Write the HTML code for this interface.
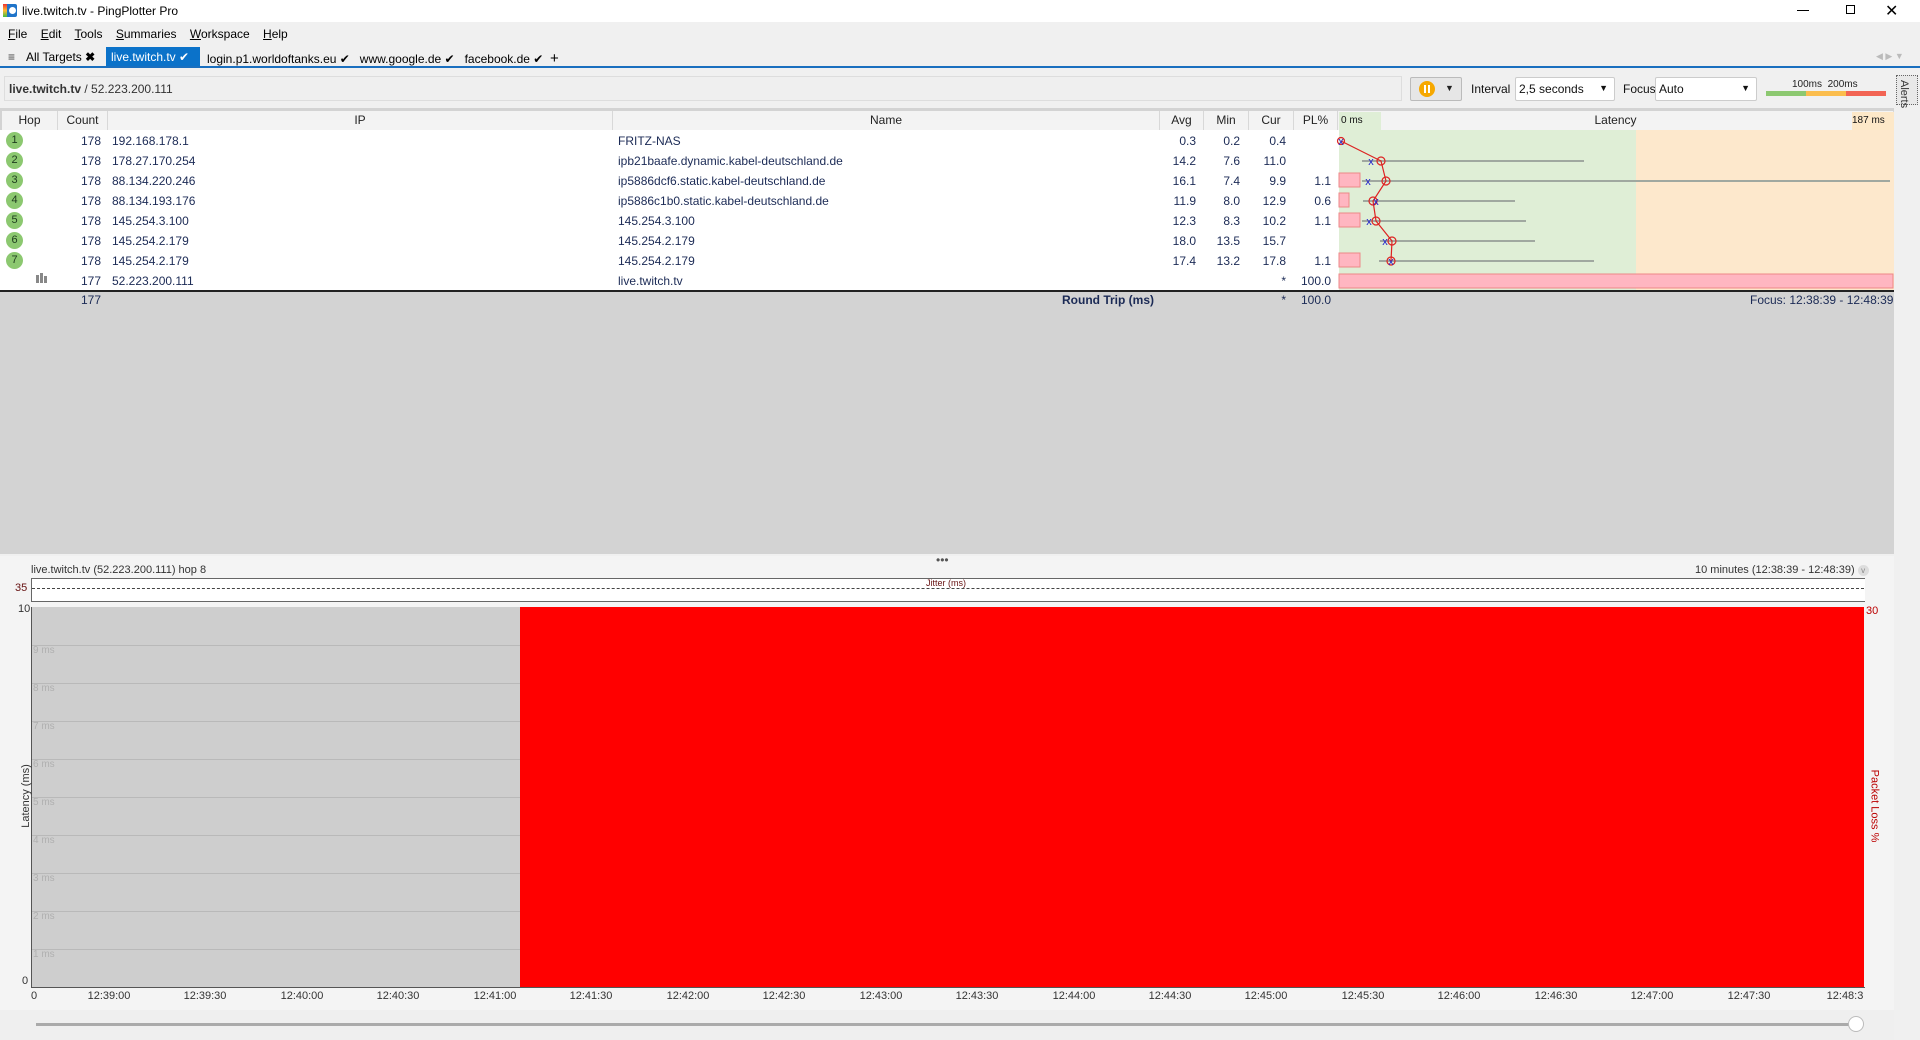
<!DOCTYPE html>
<html><head><meta charset="utf-8"><style>
*{margin:0;padding:0;box-sizing:border-box}
body{width:1920px;height:1040px;overflow:hidden;background:#f0f0f0;font-family:"Liberation Sans",sans-serif;font-size:12px;color:#1b2a55;position:relative}
.a{position:absolute;white-space:nowrap}
.r{text-align:right}
.hc{position:absolute;top:111px;height:19px;border-right:1px solid #d8d8d8;text-align:center;line-height:18px;color:#222;background:#f3f3f3}
.hop{position:absolute;left:6px;width:17px;height:17px;border-radius:50%;background:#8cc870;color:#1d3a1d;font-size:11px;text-align:center;line-height:17px}
.tl{position:absolute;top:990px;font-size:11px;color:#333;transform:translateX(-50%)}
.gl{position:absolute;left:32px;width:488px;height:1px;background:#b9b9b9}
.gt{position:absolute;left:33px;font-size:10px;color:#b0b0b0}
</style></head><body>
<div class="a" style="left:0;top:0;width:1920px;height:22px;background:#fff"></div>
<div class="a" style="left:3px;top:4px;width:14px;height:13px;background:#1f74c9;border-radius:2px"></div>
<div class="a" style="left:3px;top:4px;width:4px;height:13px;background:linear-gradient(#e33,#fb3,#4b4)"></div>
<div class="a" style="left:9px;top:7px;width:7px;height:7px;border-radius:50%;background:#fff"></div>
<div class="a" style="left:22px;top:4px;font-size:12px;color:#000">live.twitch.tv - PingPlotter Pro</div>
<div class="a" style="left:1797px;top:10px;width:12px;height:1px;background:#000"></div>
<div class="a" style="left:1846px;top:5px;width:9px;height:9px;border:1px solid #000"></div>
<div class="a" style="left:1885px;top:1px;font-size:16px;color:#000">✕</div>
<div class="a" style="left:8px;top:27px;color:#000"><u>F</u>ile &nbsp;&nbsp; <u>E</u>dit &nbsp;&nbsp; <u>T</u>ools &nbsp;&nbsp; <u>S</u>ummaries &nbsp;&nbsp; <u>W</u>orkspace &nbsp;&nbsp; <u>H</u>elp</div>
<div class="a" style="left:8px;top:50px;color:#444">≡</div>
<div class="a" style="left:26px;top:50px;color:#000">All Targets <b>✖</b></div>
<div class="a" style="left:106px;top:47px;width:94px;height:20px;background:#0b72c9"></div>
<div class="a" style="left:111px;top:50px;color:#fff">live.twitch.tv ✔</div>
<div class="a" style="left:207px;top:50px;color:#000">login.p1.worldoftanks.eu ✔ &nbsp; www.google.de ✔ &nbsp; facebook.de ✔ &nbsp;<span style="font-size:15px">+</span></div>
<div class="a" style="left:1876px;top:51px;color:#bbb;font-size:9px">◀ ▶ ▼</div>
<div class="a" style="left:0;top:66px;width:1920px;height:2px;background:#1a6fbf"></div>
<div class="a" style="left:4px;top:76px;width:1398px;height:25px;border:1px solid #ddd;background:#efefef"></div>
<div class="a" style="left:9px;top:82px;color:#333"><b>live.twitch.tv</b> / 52.223.200.111</div>
<div class="a" style="left:1410px;top:77px;width:52px;height:24px;border:1px solid #bbb;background:#e6e6e6;border-radius:2px"></div>
<div class="a" style="left:1419px;top:81px;width:16px;height:16px;border-radius:50%;background:#f6a800"></div>
<div class="a" style="left:1424px;top:85px;width:2px;height:8px;background:#fff"></div><div class="a" style="left:1428px;top:85px;width:2px;height:8px;background:#fff"></div>
<div class="a" style="left:1445px;top:83px;font-size:9px;color:#222">▼</div>
<div class="a" style="left:1471px;top:82px;color:#111">Interval</div>
<div class="a" style="left:1515px;top:77px;width:100px;height:24px;border:1px solid #ccc;background:#fff;border-radius:2px;padding:4px 3px;color:#111">2,5 seconds<span style="position:absolute;right:6px;top:5px;font-size:9px">▼</span></div>
<div class="a" style="left:1623px;top:82px;color:#111">Focus</div>
<div class="a" style="left:1655px;top:77px;width:102px;height:24px;border:1px solid #ccc;background:#fff;border-radius:2px;padding:4px 3px;color:#111">Auto<span style="position:absolute;right:6px;top:5px;font-size:9px">▼</span></div>
<div class="a" style="left:1792px;top:79px;font-size:10px;color:#222">100ms &nbsp;200ms</div>
<div class="a" style="left:1766px;top:91px;width:40px;height:5px;background:#8cc870"></div>
<div class="a" style="left:1806px;top:91px;width:40px;height:5px;background:#fbbd4d"></div>
<div class="a" style="left:1846px;top:91px;width:40px;height:5px;background:#f26454"></div>
<div class="a" style="left:1896px;top:75px;width:22px;height:30px;border:1px dotted #666;background:#e8e8e8"></div>
<div class="a" style="left:1898px;top:80px;font-size:11px;color:#333;transform:rotate(90deg);transform-origin:6px 6px">Alerts</div>
<div class="a" style="left:0;top:108px;width:1894px;height:446px;background:#d3d3d3"></div>
<div class="a" style="left:0;top:130px;width:1894px;height:160px;background:#fff"></div>
<div class="hc" style="left:2px;width:56px">Hop</div>
<div class="hc" style="left:58px;width:50px">Count</div>
<div class="hc" style="left:108px;width:505px">IP</div>
<div class="hc" style="left:613px;width:547px">Name</div>
<div class="hc" style="left:1160px;width:44px">Avg</div>
<div class="hc" style="left:1204px;width:45px">Min</div>
<div class="hc" style="left:1249px;width:45px">Cur</div>
<div class="hc" style="left:1294px;width:44px">PL%</div>
<div class="hc" style="left:1338px;width:556px;background:#f3f3f3">Latency</div>
<div class="a" style="left:1339px;top:112px;width:42px;height:18px;background:#dfeed6;font-size:10px;line-height:18px;padding-left:2px;color:#111">0 ms</div>
<div class="a" style="left:1852px;top:112px;width:42px;height:18px;background:#fde8c8;font-size:10px;line-height:18px;color:#111">187 ms</div>
<div class="a" style="left:1339px;top:130px;width:297px;height:160px;background:#dfeed6"></div>
<div class="a" style="left:1636px;top:130px;width:258px;height:160px;background:#fde8cc"></div>
<div class="a" style="left:0;top:290px;width:1894px;height:2px;background:#222"></div>
<div class="hop" style="top:132px">1</div><div class="hop" style="top:152px">2</div><div class="hop" style="top:172px">3</div><div class="hop" style="top:192px">4</div><div class="hop" style="top:212px">5</div><div class="hop" style="top:232px">6</div><div class="hop" style="top:252px">7</div>
<div class="a" style="left:36px;top:275px;width:3px;height:8px;background:#888"></div><div class="a" style="left:40px;top:273px;width:3px;height:10px;background:#888"></div><div class="a" style="left:44px;top:276px;width:3px;height:7px;background:#888"></div>
<div class="a r" style="left:58px;top:131px;width:43px;line-height:20px">178<br>178<br>178<br>178<br>178<br>178<br>178<br>177</div>
<div class="a" style="left:112px;top:131px;line-height:20px">192.168.178.1<br>178.27.170.254<br>88.134.220.246<br>88.134.193.176<br>145.254.3.100<br>145.254.2.179<br>145.254.2.179<br>52.223.200.111</div>
<div class="a" style="left:618px;top:131px;line-height:20px">FRITZ-NAS<br>ipb21baafe.dynamic.kabel-deutschland.de<br>ip5886dcf6.static.kabel-deutschland.de<br>ip5886c1b0.static.kabel-deutschland.de<br>145.254.3.100<br>145.254.2.179<br>145.254.2.179<br>live.twitch.tv</div>
<div class="a r" style="left:1160px;top:131px;width:36px;line-height:20px">0.3<br>14.2<br>16.1<br>11.9<br>12.3<br>18.0<br>17.4</div>
<div class="a r" style="left:1204px;top:131px;width:36px;line-height:20px">0.2<br>7.6<br>7.4<br>8.0<br>8.3<br>13.5<br>13.2</div>
<div class="a r" style="left:1249px;top:131px;width:37px;line-height:20px">0.4<br>11.0<br>9.9<br>12.9<br>10.2<br>15.7<br>17.8<br>*</div>
<div class="a r" style="left:1294px;top:131px;width:37px;line-height:20px">&nbsp;<br>&nbsp;<br>1.1<br>0.6<br>1.1<br>&nbsp;<br>1.1<br>100.0</div>
<div class="a r" style="left:58px;top:293px;width:43px">177</div>
<div class="a" style="left:1062px;top:293px"><b>Round Trip (ms)</b></div>
<div class="a r" style="left:1249px;top:293px;width:37px">*</div>
<div class="a r" style="left:1294px;top:293px;width:37px">100.0</div>
<div class="a" style="left:1750px;top:293px">Focus: 12:38:39 - 12:48:39</div>
<svg class="a" style="left:0;top:0" width="1920" height="300">
<g fill="#ffb6c1" stroke="#e88">
<rect x="1339" y="173" width="21" height="14"/><rect x="1339" y="193" width="10" height="14"/><rect x="1339" y="213" width="21" height="14"/><rect x="1339" y="253" width="21" height="14"/><rect x="1339" y="274" width="554" height="14"/></g>
<g stroke="#a0a8a0" stroke-width="2">
<line x1="1362" y1="161" x2="1584" y2="161"/><line x1="1362" y1="181" x2="1890" y2="181"/><line x1="1363" y1="201" x2="1515" y2="201"/><line x1="1362" y1="221" x2="1526" y2="221"/><line x1="1380" y1="241" x2="1535" y2="241"/><line x1="1379" y1="261" x2="1594" y2="261"/></g>
<polyline points="1341,141 1381,161 1386,181 1373,201 1376,221 1392,241 1391,261" fill="none" stroke="#d22" stroke-width="1.2"/>
<g fill="none" stroke="#d22" stroke-width="1.2"><circle cx="1341" cy="141" r="3.5"/><circle cx="1381" cy="161" r="4"/><circle cx="1386" cy="181" r="4"/><circle cx="1373" cy="201" r="4"/><circle cx="1376" cy="221" r="4"/><circle cx="1392" cy="241" r="4"/><circle cx="1391" cy="261" r="4"/></g>
<g fill="#22c" font-size="11" font-family="Liberation Sans" text-anchor="middle"><text x="1341" y="145">x</text><text x="1371" y="165">x</text><text x="1368" y="185">x</text><text x="1376" y="205">x</text><text x="1369" y="225">x</text><text x="1385" y="245">x</text><text x="1391" y="265">x</text></g>
</svg>
<div class="a" style="left:936px;top:556px;color:#555;font-size:12px;line-height:8px">•••</div>
<div class="a" style="left:0;top:556px;width:1894px;height:484px;background:#f4f4f4"></div>
<div class="a" style="left:936px;top:556px;color:#555;font-size:12px;line-height:8px">•••</div>
<div class="a" style="left:31px;top:564px;font-size:11px;color:#333">live.twitch.tv (52.223.200.111) hop 8</div>
<div class="a" style="left:1695px;top:564px;font-size:11px;color:#333">10 minutes (12:38:39 - 12:48:39) <span style="display:inline-block;width:11px;height:11px;border-radius:50%;background:#ddd;font-size:8px;text-align:center;line-height:11px;color:#888">v</span></div>
<div class="a" style="left:31px;top:578px;width:1834px;height:24px;background:#fff;border-top:1px solid #666;border-bottom:1px solid #666;border-left:1px solid #666"></div>
<div class="a" style="left:32px;top:588px;width:1832px;border-top:1px dashed #444"></div>
<div class="a" style="left:926px;top:578px;font-size:9px;color:#611">Jitter (ms)</div>
<div class="a" style="left:15px;top:582px;font-size:11px;color:#611">35</div>
<div class="a" style="left:32px;top:607px;width:488px;height:380px;background:#cecece"></div>
<div class="a" style="left:520px;top:607px;width:1344px;height:380px;background:#ff0000"></div>
<div class="gl" style="top:645px"></div><div class="gl" style="top:683px"></div><div class="gl" style="top:721px"></div><div class="gl" style="top:759px"></div><div class="gl" style="top:797px"></div><div class="gl" style="top:835px"></div><div class="gl" style="top:873px"></div><div class="gl" style="top:911px"></div><div class="gl" style="top:949px"></div>
<div class="gt" style="top:645px">9 ms</div><div class="gt" style="top:683px">8 ms</div><div class="gt" style="top:721px">7 ms</div><div class="gt" style="top:759px">6 ms</div><div class="gt" style="top:797px">5 ms</div><div class="gt" style="top:835px">4 ms</div><div class="gt" style="top:873px">3 ms</div><div class="gt" style="top:911px">2 ms</div><div class="gt" style="top:949px">1 ms</div>
<div class="a" style="left:31px;top:607px;width:1px;height:381px;background:#555"></div>
<div class="a" style="left:31px;top:987px;width:1834px;height:1px;background:#555"></div>
<div class="a" style="left:18px;top:603px;font-size:11px;color:#333">10</div>
<div class="a" style="left:22px;top:975px;font-size:11px;color:#333">0</div>
<div class="a" style="left:1866px;top:605px;font-size:11px;color:#b00">30</div>
<div class="a" style="left:-6px;top:790px;font-size:11px;color:#333;transform:rotate(-90deg)">Latency (ms)</div>
<div class="a" style="left:1838px;top:800px;font-size:11px;color:#b00;transform:rotate(90deg)">Packet Loss %</div>
<div class="tl" style="left:34px">0</div>
<div class="tl" style="left:109px">12:39:00</div><div class="tl" style="left:205px">12:39:30</div><div class="tl" style="left:302px">12:40:00</div><div class="tl" style="left:398px">12:40:30</div><div class="tl" style="left:495px">12:41:00</div><div class="tl" style="left:591px">12:41:30</div><div class="tl" style="left:688px">12:42:00</div><div class="tl" style="left:784px">12:42:30</div><div class="tl" style="left:881px">12:43:00</div><div class="tl" style="left:977px">12:43:30</div><div class="tl" style="left:1074px">12:44:00</div><div class="tl" style="left:1170px">12:44:30</div><div class="tl" style="left:1266px">12:45:00</div><div class="tl" style="left:1363px">12:45:30</div><div class="tl" style="left:1459px">12:46:00</div><div class="tl" style="left:1556px">12:46:30</div><div class="tl" style="left:1652px">12:47:00</div><div class="tl" style="left:1749px">12:47:30</div><div class="tl" style="left:1845px">12:48:3</div>
<div class="a" style="left:0;top:1010px;width:1894px;height:30px;background:#efefef"></div>
<div class="a" style="left:36px;top:1023px;width:1820px;height:3px;background:#aaa"></div>
<div class="a" style="left:1848px;top:1016px;width:16px;height:16px;border-radius:50%;background:#fff;border:1px solid #bbb"></div>
</body></html>
